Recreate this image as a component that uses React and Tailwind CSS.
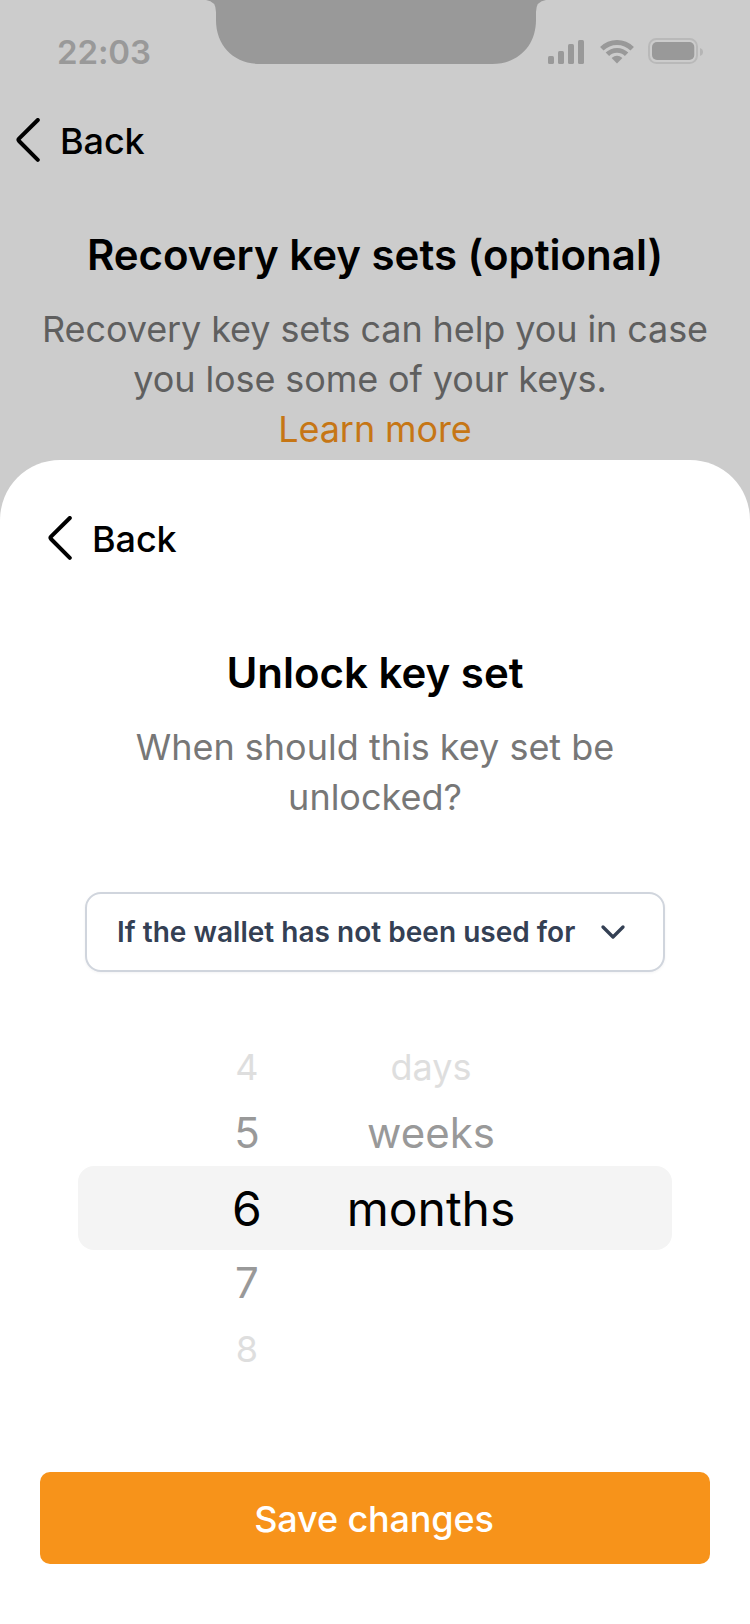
const BackButton = () => (
  <button className="flex h-11 items-center text-4xl leading-11 font-medium text-black">
    <svg width="24" height="44" viewBox="0 0 24 44" fill="none" className="mr-5 shrink-0">
      <path
        d="M21.8 2 L3 20.6 Q1.9 21.8 3 23 L21.8 41.8"
        stroke="currentColor"
        strokeWidth="4"
        strokeLinecap="round"
        strokeLinejoin="round"
      />
    </svg>
    <span className="pt-[2px] tracking-[-0.1px]">Back</span>
  </button>
);

const StatusIcons = () => (
  <svg width="156" height="28" viewBox="548 37 156 28" fill="none" className="shrink-0 text-[#999]">
    <g fill="currentColor">
      <rect x="548" y="56" width="6" height="8" rx="1.6" />
      <rect x="558" y="51" width="6" height="13" rx="1.6" />
      <rect x="568" y="44" width="6" height="20" rx="1.6" />
      <rect x="578" y="40" width="6" height="24" rx="1.6" />
      <path d="M617 63.6 L611.6 58 Q617 53.4 622.4 58 Z" />
      <rect x="652" y="42" width="42.3" height="18" rx="5" />
    </g>
    <g stroke="currentColor" strokeWidth="4.9">
      <path d="M601.8 48.8 A21.5 21.5 0 0 1 632.2 48.8" />
      <path d="M607.4 54.3 A13.6 13.6 0 0 1 626.6 54.3" />
    </g>
    <rect x="649" y="39" width="48" height="24" rx="7.4" stroke="#b9b9b9" strokeWidth="2" />
    <path d="M700 48 Q703 49.2 703 52 Q703 54.8 700 56 Z" fill="#b5b5b5" />
  </svg>
);

const Picker = ({ align, items }) => (
  <ul className={`relative flex flex-col items-center text-center ${align}`}>
    {items.map(([label, style]) => (
      <li key={label} className={style}>
        {label}
      </li>
    ))}
  </ul>
);

const far = "text-4xl h-[66px] leading-[67px] text-[#dedede]";
const near = "text-[42px] h-[66px] leading-[66px] text-[#999]";
const current = "text-5xl h-[84px] leading-[86px] text-black";

export default function App() {
  return (
    <div className="flex h-[1624px] w-[750px] flex-col overflow-hidden bg-[#ccc] font-['Inter',sans-serif]">
      <header className="flex h-[460px] shrink-0 flex-col">
        <div className="flex h-[119px] items-start">
          <div className="w-[206px] pt-[29px] pl-[57px] text-[33px] leading-[46px] font-semibold tracking-[-0.1px] text-[#999]">
            22:03
          </div>
          <svg width="340" height="64" viewBox="0 0 340 64" className="shrink-0">
            <path
              d="M0 0 H340 Q330 1 330 12 V20 C330 46 312 64 286 64 H54 C28 64 10 46 10 20 V12 Q10 1 0 0 Z"
              fill="#999"
            />
          </svg>
          <div className="pt-[37px] pl-[2px]">
            <StatusIcons />
          </div>
        </div>
        <div className="-mt-px pl-4">
          <BackButton />
        </div>
        <h1 className="mt-[68px] text-center text-[42px] leading-[50px] font-semibold text-black">
          Recovery key sets (optional)
        </h1>
        <p className="mt-6 text-center text-4xl leading-[50px] tracking-[-0.1px] text-[#5f5f5f]">
          Recovery key sets can help you in case
          <br />
          you lose some of your keys.&nbsp;
          <br />
          <a className="text-[#c67615]">Learn more</a>
        </p>
      </header>

      <main className="flex grow flex-col rounded-t-[60px] bg-white pt-14 pb-[60px]">
        <div className="pl-12">
          <BackButton />
        </div>
        <h2 className="mt-[88px] text-center text-[42px] leading-[50px] font-semibold text-black">
          Unlock key set
        </h2>
        <p className="mt-6 text-center text-4xl leading-[50px] text-[#777]">
          When should this key set be
          <br />
          unlocked?
        </p>
        <button className="mt-[70px] ml-[85px] flex h-20 w-[580px] items-center justify-between rounded-2xl border-2 border-[#d0d5dd] bg-white pr-[30px] pl-[30px] text-[28px] font-semibold whitespace-nowrap text-[#344054] shadow-[0_1px_3px_rgba(16,24,40,0.05)]">
          <span className="tracking-[0.02px]">If the wallet has not been used for</span>
          <svg width="40" height="40" viewBox="0 0 20 20" fill="none" className="shrink-0">
            <path
              d="M5 7.5 L10 12.5 L15 7.5"
              stroke="currentColor"
              strokeWidth="1.67"
              strokeLinecap="round"
              strokeLinejoin="round"
            />
          </svg>
        </button>
        <section className="mt-[62px] grid h-[348px] grid-cols-[78px_594px] grid-rows-[132px_84px_132px]">
          <div className="col-start-2 row-start-2 rounded-2xl bg-[#f4f4f4]" />
          <div className="col-start-2 row-span-3 row-start-1 flex">
            <Picker
              align="ml-[129px] w-20"
              items={[
                ["4", far],
                ["5", near],
                ["6", current],
                ["7", near],
                ["8", far],
              ]}
            />
            <Picker
              align="ml-[44px] w-50"
              items={[
                ["days", far],
                ["weeks", near],
                ["months", current],
              ]}
            />
          </div>
        </section>
        <button className="mx-10 mt-auto h-[92px] shrink-0 rounded-[10px] bg-[#f7931a] pt-[2px] pr-[2px] text-4xl font-medium tracking-[-0.15px] text-white">
          Save changes
        </button>
      </main>
    </div>
  );
}
